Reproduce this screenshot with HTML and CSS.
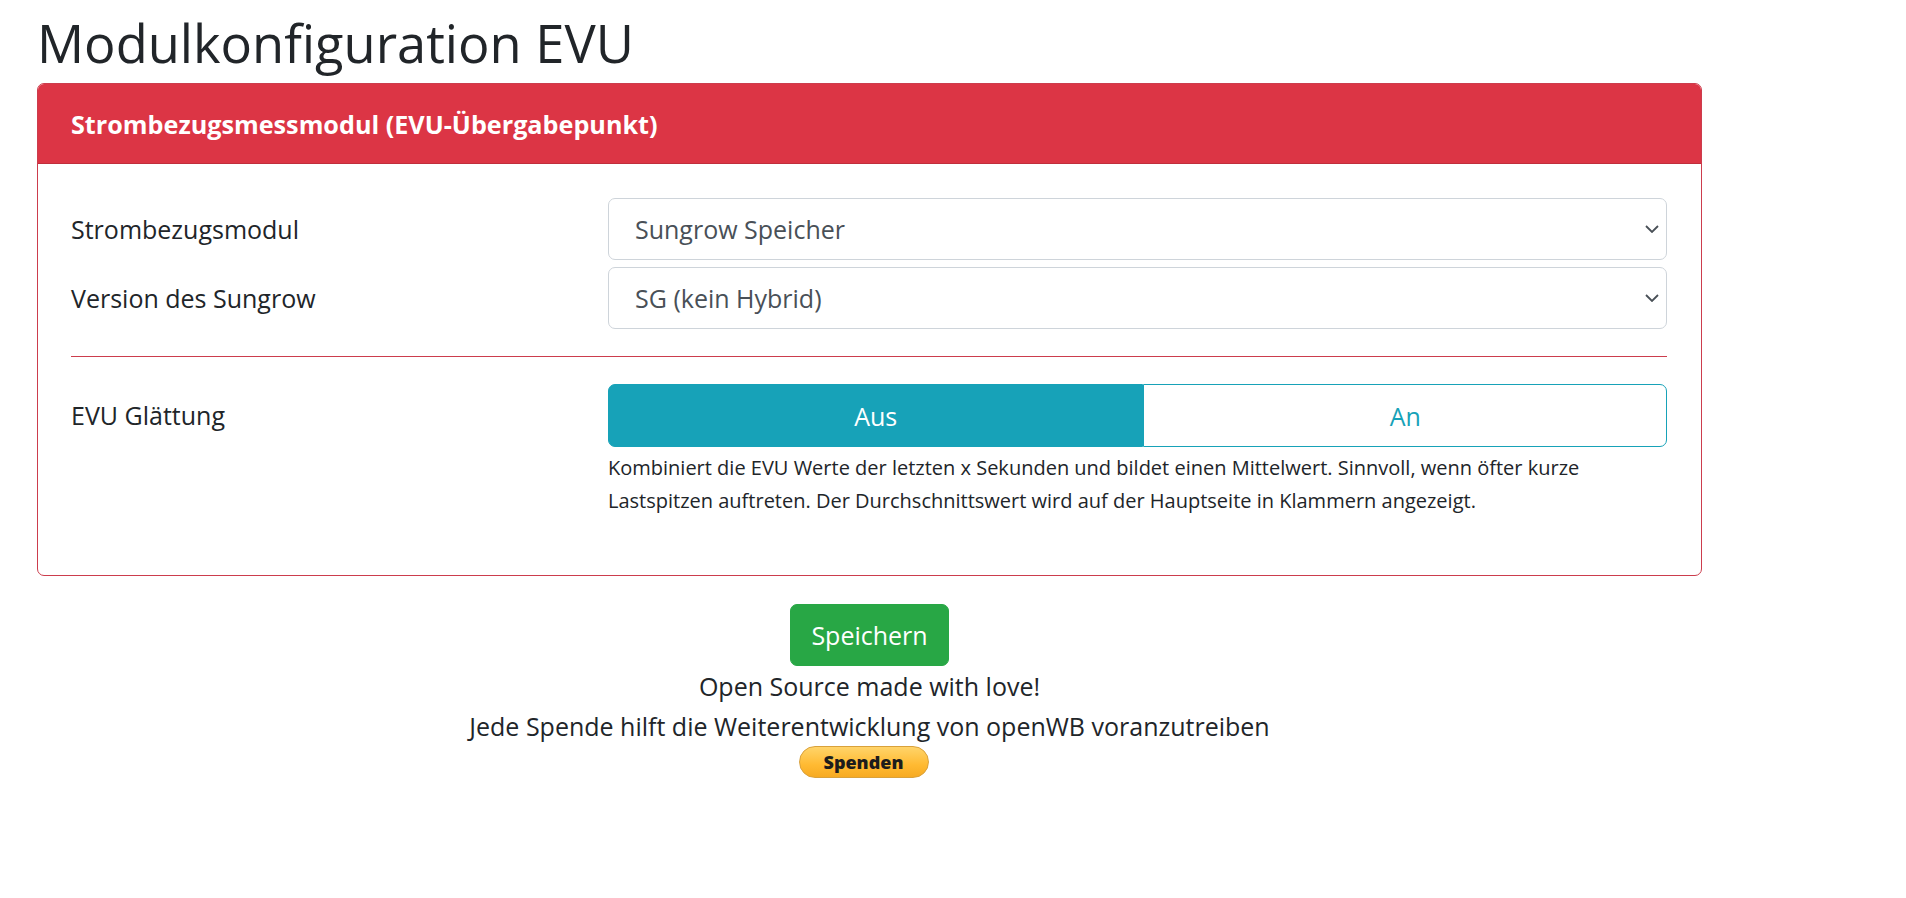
FILE: index.html
```html
<!DOCTYPE html>
<html lang="de">
<head>
<meta charset="utf-8">
<title>Modulkonfiguration EVU</title>
<link rel="stylesheet" href="styles.css">
</head>
<body>
<div class="page">
  <h1 class="title">Modulkonfiguration EVU</h1>
  <div class="card">
    <div class="card-header">Strombezugsmessmodul (EVU-Übergabepunkt)</div>
    <div class="card-body">
      <div class="row">
        <label class="label">Strombezugsmodul</label>
        <div class="field">
          <select class="select"><option>Sungrow Speicher</option></select>
        </div>
      </div>
      <div class="row">
        <label class="label">Version des Sungrow</label>
        <div class="field">
          <select class="select"><option>SG (kein Hybrid)</option></select>
        </div>
      </div>
      <hr class="divider">
      <div class="row row-top">
        <label class="label">EVU Glättung</label>
        <div class="field">
          <div class="btn-group">
            <button class="toggle toggle-active">Aus</button>
            <button class="toggle">An</button>
          </div>
          <p class="help">Kombiniert die EVU Werte der letzten x Sekunden und bildet einen Mittelwert. Sinnvoll, wenn öfter kurze Lastspitzen auftreten. Der Durchschnittswert wird auf der Hauptseite in Klammern angezeigt.</p>
        </div>
      </div>
    </div>
  </div>
  <div class="footer">
    <button class="save">Speichern</button>
    <p class="footer-line">Open Source made with love!</p>
    <p class="footer-line">Jede Spende hilft die Weiterentwicklung von openWB voranzutreiben</p>
    <span class="donate">Spenden</span>
  </div>
</div>
</body>
</html>
```
FILE: styles.css
```css
html, body {
  margin: 0;
  padding: 0;
  background: #fff;
}

body {
  font-family: "Open Sans", "Noto Sans", "DejaVu Sans", sans-serif;
  color: #212529;
  font-size: 25px;
  line-height: 40px;
}

.page {
  width: 1665px;
  margin-left: 37px;
}

.title {
  font-size: 52.4px;
  font-weight: 500;
  line-height: 64px;
  margin: 11px 0 8px 0;
  color: #212529;
}

.card {
  border: 1px solid #cc3d4d;
  border-radius: 7px;
  overflow: hidden;
}

.card-header {
  background: #dc3545;
  color: #fff;
  font-weight: 700;
  font-size: 25.2px;
  height: 80px;
  box-sizing: border-box;
  border-bottom: 1px solid rgba(0, 0, 0, 0.125);
  display: flex;
  align-items: center;
  padding: 0 33px;
}

.card-body {
  padding: 34px 34px 33px 33px;
}

.row {
  display: grid;
  grid-template-columns: 537px 1fr;
  align-items: center;
  margin-bottom: 7px;
}

.row-top {
  align-items: start;
  margin-bottom: 0;
}

.label {
  font-size: 25px;
  line-height: 40px;
}

.row-top .label {
  padding-top: 11px;
}

.select {
  display: block;
  width: 100%;
  height: 62px;
  box-sizing: border-box;
  border: 1px solid #ced4da;
  border-radius: 7px;
  background-color: #fff;
  background-image: url("data:image/svg+xml,%3Csvg xmlns='http://www.w3.org/2000/svg' width='14' height='8' viewBox='0 0 14 8'%3E%3Cpath d='M1 1l6 6 6-6' fill='none' stroke='%23495057' stroke-width='1.8'/%3E%3C/svg%3E");
  background-repeat: no-repeat;
  background-position: right 7px center;
  color: #495057;
  font-family: inherit;
  font-size: 25px;
  padding: 0 30px 0 26px;
  -webkit-appearance: none;
  appearance: none;
}

.divider {
  border: 0;
  border-top: 1px solid #cc3d4d;
  margin: 27px 0 27px 0;
}

.btn-group {
  display: flex;
  height: 63px;
}

.toggle {
  flex: 1 1 auto;
  font-family: inherit;
  font-size: 25px;
  border: 1px solid #17a2b8;
  background: #fff;
  color: #17a2b8;
  padding: 0 20px;
  border-radius: 0 7px 7px 0;
}

.toggle-active {
  background: #17a2b8;
  color: #fff;
  border-radius: 7px 0 0 7px;
}

.help {
  margin: 4px 0 25px 0;
  font-size: 20px;
  line-height: 33px;
  color: #212529;
}

.footer {
  display: flex;
  flex-direction: column;
  align-items: center;
  margin-top: 28px;
}

.save {
  height: 62px;
  padding: 0 20px;
  border: 1px solid #28a745;
  background: #28a745;
  color: #fff;
  border-radius: 7px;
  font-family: inherit;
  font-size: 25px;
}

.footer-line {
  margin: 0;
  font-size: 25px;
  line-height: 40px;
}

.donate {
  display: inline-flex;
  align-items: center;
  justify-content: center;
  width: 128px;
  height: 30px;
  margin-right: 12px;
  border: 1px solid #d9a13b;
  border-radius: 16px;
  background: linear-gradient(#ffd46a, #ffba32 60%, #f7aa22);
  color: #1c1c1c;
  font-family: "Open Sans", "DejaVu Sans", sans-serif;
  font-weight: 800;
  font-size: 18px;
  line-height: 1;
}
```
